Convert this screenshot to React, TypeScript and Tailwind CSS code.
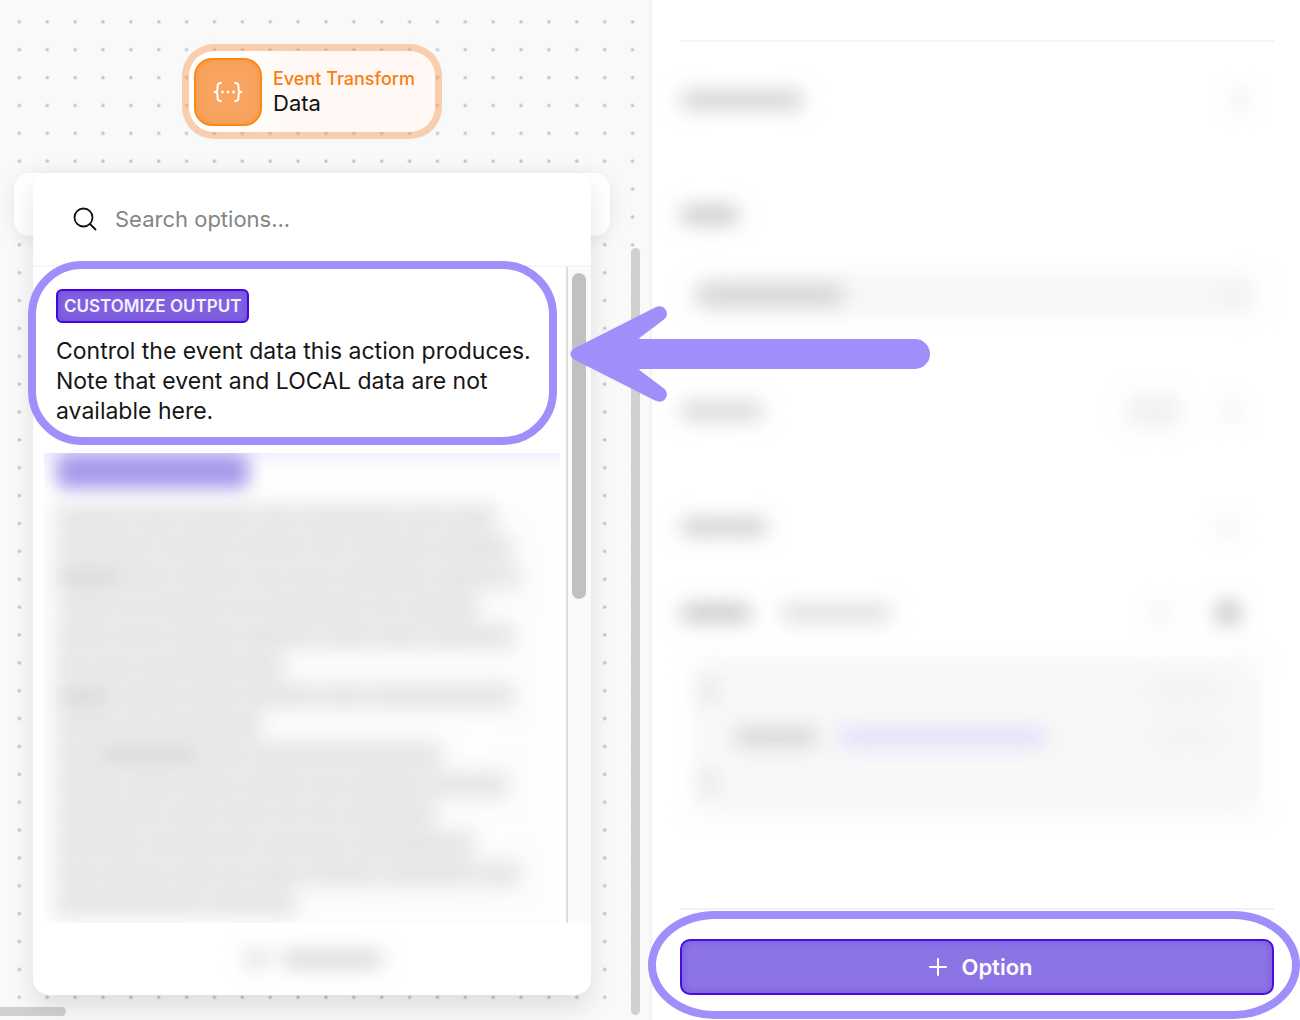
import type { ReactNode } from "react";

// Each row holds the word widths of one obscured line, in pixels.
const HIDDEN_LINES = [
  [70, 44, 66, 34, 98, 34, 46],
  [96, 70, 66, 32, 76, 76],
  [66, 40, 66, 30, 40, 88, 64, 14],
  [0, 50, 24, 66, 24, 104, 28, 70],
  [54, 46, 62, 74, 46, 42, 86],
  [30, 40, 142],
  [54, 62, 50, 68, 42, 142],
  [60, 30, 100],
  [36, 98, 40, 188],
  [64, 46, 54, 60, 30, 68, 82],
  [104, 46, 44, 26, 28, 92],
  [84, 108, 82, 120],
  [38, 64, 40, 24, 44, 70, 88, 40],
  [146, 86],
];

const DARK_WORDS = ["2-0", "6-0", "8-1"];

function Smudge({ className }: { className: string }) {
  return <span aria-hidden="true" className={`block shrink-0 rounded-full blur-[10px] ${className}`} />;
}

function HiddenText() {
  return (
    <div aria-hidden="true" className="flex h-[415px] flex-col pl-3 pr-6 blur-[10px]">
      {HIDDEN_LINES.map((line, i) => (
        <div key={i} className="flex flex-1">
          <div className="flex items-center gap-2 bg-[#eeeeee]">
            {line.map((width, j) => (
              <span
                key={j}
                className={`h-3 ${DARK_WORDS.includes(`${i}-${j}`) ? "bg-[#cfcfcf]" : "bg-[#dedede]"}`}
                style={{ width }}
              />
            ))}
          </div>
        </div>
      ))}
    </div>
  );
}

function DotGrid() {
  return (
    <svg aria-hidden="true" className="absolute inset-0 h-full w-full">
      <defs>
        <pattern id="dots" x="5.5" y="7.9" width="27.87" height="27.87" patternUnits="userSpaceOnUse">
          <circle cx="13.9" cy="13.9" r="1.8" fill="#c4c4c4" />
        </pattern>
      </defs>
      <rect width="100%" height="100%" fill="url(#dots)" />
    </svg>
  );
}

function TransformIcon() {
  return (
    <svg viewBox="0 0 30 22" className="h-[22px] w-[30px]" fill="none" stroke="white" strokeWidth="2" strokeLinecap="round" strokeLinejoin="round">
      <path d="M8 2C5 2 4.500 3.500 4.500 5.500V8C4.500 9.500 3.500 11 1.500 11C3.500 11 4.500 12.500 4.500 14V16.500C4.500 18.500 5 20 8 20" />
      <path d="M22 2C25 2 25.500 3.500 25.500 5.500V8C25.500 9.500 26.500 11 28.500 11C26.500 11 25.500 12.500 25.500 14V16.500C25.500 18.500 25 20 22 20" />
      <path d="M9.500 11h.01M15 11h.01M20.500 11h.01" strokeWidth="3" />
    </svg>
  );
}

function ActionNode() {
  return (
    <div className="relative flex h-[95px] w-[260px] items-center gap-[11px] rounded-[32px] border-[7px] border-[#f79a55]/45 bg-[linear-gradient(90deg,#fff_20%,#fff8f4_45%)] bg-clip-padding pl-[5px] shadow-[0_0_10px_#f3f9fc]">
      <div className="flex size-[68px] items-center justify-center rounded-[18px] border-2 border-[#fb8a12] bg-[#f8a35f] shadow-[inset_0_0_6px_#f79640]">
        <TransformIcon />
      </div>
      <div className="pb-0.5 leading-6">
        <p className="text-[18px] font-medium text-[#fb7d10]">Event Transform</p>
        <p className="text-[22px] text-[#111]">Data</p>
      </div>
    </div>
  );
}

function OptionsPopup() {
  return (
    <div className="relative z-10 mx-auto -mt-[63px] flex w-[558px] flex-col rounded-2xl bg-white shadow-[0_12px_24px_rgba(0,0,0,0.11)]">
      <div className="flex h-[94px] items-center gap-[18px] border-b-2 border-[#f7f7f7] px-10">
        <svg aria-hidden="true" viewBox="0 0 24 24" className="size-6 shrink-0" fill="none" stroke="#111" strokeWidth="1.800" strokeLinecap="round">
          <circle cx="10.500" cy="10.500" r="9" />
          <path d="M17 17l5.500 5.500" />
        </svg>
        <input type="text" aria-label="Search options" placeholder="Search options..." className="h-10 w-full bg-transparent text-[22px] leading-10 outline-none placeholder:text-[#858585]" />
      </div>
      <div className="flex">
        <div className="min-w-0 flex-1">
          <div className="relative h-[186px] px-[23px] pt-[22px]">
            <div className="pointer-events-none absolute -left-[5px] -top-1.5 h-[184px] w-[529px] rounded-[54px] border-8 border-[#9f8ffa]" />
            <div className="flex">
              <span className="flex h-[34px] items-center rounded-md border-2 border-[#4406de] bg-[#8160e0] px-1.5 pt-0.5 text-[17px] font-semibold text-[#f4f0ff] shadow-[inset_0_0_6px_#6f48dd]">
                CUSTOMIZE OUTPUT
              </span>
            </div>
            <p className="mt-[13px] whitespace-nowrap text-[23px] leading-[30px] text-[#161616]">
              Control the event data this action produces.
              <br />
              Note that event and LOCAL data are not
              <br />
              available here.
            </p>
          </div>
          <div className="ml-[11px] mr-1.5 h-[470px] overflow-hidden bg-[#fdfdfd]">
            <div className="bg-[linear-gradient(180deg,#f3f0ff,#fefefe_16px)] pb-[14px] pl-3">
              <div aria-hidden="true" className="h-9 w-[193px] rounded-xl bg-[#a898ec] blur-[9px]" />
            </div>
            <HiddenText />
          </div>
        </div>
        <div className="w-[25px] border-l-2 border-[#dedede] bg-[#fafafa] pl-1 pt-1.5">
          <div className="h-[326px] w-3.5 rounded-full bg-[#c1c1c1]" />
        </div>
      </div>
      <div aria-hidden="true" className="flex h-[72px] items-center justify-center gap-3 pl-1">
        <Smudge className="h-4 w-6 bg-[#dadada]" />
        <Smudge className="h-4 w-[104px] bg-[#d4d4d4]" />
      </div>
    </div>
  );
}

function Canvas() {
  return (
    <section className="relative flex w-[calc(50%+2px)] flex-col overflow-hidden border-r-2 border-[#f2f2f2] bg-[#f9f9f9] pr-[26px] pt-11">
      <DotGrid />
      <div className="flex justify-center">
        <ActionNode />
      </div>
      <div className="relative mx-auto mt-[34px] h-[63px] w-[596px] rounded-2xl bg-white shadow-[0_2px_20px_rgba(0,0,0,0.08)]" />
      <OptionsPopup />
      <div className="absolute bottom-[5px] right-2.5 top-[248px] w-[9px] rounded-full bg-[#d0d0d0]" />
      <div className="absolute bottom-1 left-0 h-[9px] w-[66px] rounded-r-full bg-[#d0d0d0]" />
    </section>
  );
}

function Row({ className, children }: { className: string; children: ReactNode }) {
  return (
    <div aria-hidden="true" className={`flex items-center ${className}`}>
      {children}
    </div>
  );
}

function SidePanel() {
  return (
    <section className="flex flex-1 flex-col bg-white pl-7 pr-[26px] pt-10">
      <hr className="border-t-2 border-[#f4f4f4]" />
      <Row className="h-[115px] justify-between pr-[26px]">
        <Smudge className="h-[18px] w-[124px] bg-[#cfcfcf]" />
        <Smudge className="size-4 bg-[#e6e6e6]" />
      </Row>
      <Row className="h-[116px]">
        <Smudge className="h-[18px] w-[60px] bg-[#c8c8c8]" />
      </Row>
      <Row className="relative h-11 justify-between px-4">
        <Smudge className="absolute inset-x-3 inset-y-0 bg-[#f7f7f7]" />
        <Smudge className="relative h-[18px] w-[148px] bg-[#cfcfcf]" />
        <Smudge className="relative mr-4 size-4 bg-[#ebebeb]" />
      </Row>
      <Row className="mt-9 h-[116px] gap-10 pr-[34px]">
        <Smudge className="h-[18px] w-[84px] bg-[#d6d6d6]" />
        <Smudge className="ml-auto h-9 w-[60px] bg-[#f2f2f2]" />
        <Smudge className="size-4 bg-[#e9e9e9]" />
      </Row>
      <Row className="h-[116px] justify-between pr-[38px]">
        <Smudge className="h-[18px] w-[88px] bg-[#cfcfcf]" />
        <Smudge className="size-4 bg-[#e9e9e9]" />
      </Row>
      <Row className="h-[56px] pr-[34px]">
        <Smudge className="h-[18px] w-[72px] bg-[#c6c6c6]" />
        <Smudge className="ml-7 h-[18px] w-[112px] bg-[#dedede]" />
        <Smudge className="ml-auto size-4 bg-[#e8e8e8]" />
        <Smudge className="ml-12 size-6 bg-[#bcbcbc]" />
      </Row>
      <div aria-hidden="true" className="relative mt-4 flex h-[160px] flex-col justify-between px-6 py-6">
        <div className="absolute inset-x-3 inset-y-0 rounded-xl bg-[#f8f8f8] blur-[10px]" />
        <Row className="relative justify-between pr-7">
          <Smudge className="h-5 w-2.5 bg-[#d6d6d6]" />
          <Smudge className="h-4 w-[72px] bg-[#f1f1f1]" />
        </Row>
        <Row className="relative gap-5 pl-[30px] pr-7">
          <Smudge className="h-[18px] w-[84px] bg-[#d4d4d4]" />
          <Smudge className="h-[18px] w-[210px] bg-[#e2dcfb]" />
          <Smudge className="ml-auto h-4 w-[68px] bg-[#f2f2f2]" />
        </Row>
        <Row className="relative">
          <Smudge className="h-5 w-2.5 bg-[#d6d6d6]" />
        </Row>
      </div>
      <div className="mt-auto border-t-2 border-[#f2f2f2] pb-[25px] pt-[29px]">
        <div className="relative">
          <button type="button" className="flex h-14 w-full items-center justify-center gap-[14px] rounded-[10px] border-2 border-[#4a0ce0] bg-[#8d74e6] pl-2 text-[22px] font-semibold text-white shadow-[inset_0_0_8px_#7657d8]">
            <svg aria-hidden="true" viewBox="0 0 18 18" className="size-[18px]" stroke="currentColor" strokeWidth="2" strokeLinecap="round">
              <path d="M9 1v16M1 9h16" />
            </svg>
            Option
          </button>
          <div className="pointer-events-none absolute -bottom-6 -left-8 -right-[26px] -top-7 rounded-[67px/54px] border-8 border-[#9f8ffa]" />
        </div>
      </div>
    </section>
  );
}

function PointerArrow() {
  return (
    <svg aria-hidden="true" viewBox="0 0 360 98" className="pointer-events-none absolute left-[calc(50%-80px)] top-[305px] z-20 h-[98px] w-[360px]">
      <path
        fill="#9f8ffa"
        d="M5 43L85 2.500C89 .5 93 1 95.500 4.500C98 8 97 12 94 14.500L68 34H345A15 15 0 0 1 345 64H68L94 83.500C97 86 98 90 95.500 93.500C93 97 89 97.500 85 95.500L5 55C-1 52 -1 46 5 43Z"
      />
    </svg>
  );
}

export default function App() {
  return (
    <main className="relative flex min-h-screen bg-white font-['Inter',sans-serif]">
      <Canvas />
      <SidePanel />
      <PointerArrow />
    </main>
  );
}
